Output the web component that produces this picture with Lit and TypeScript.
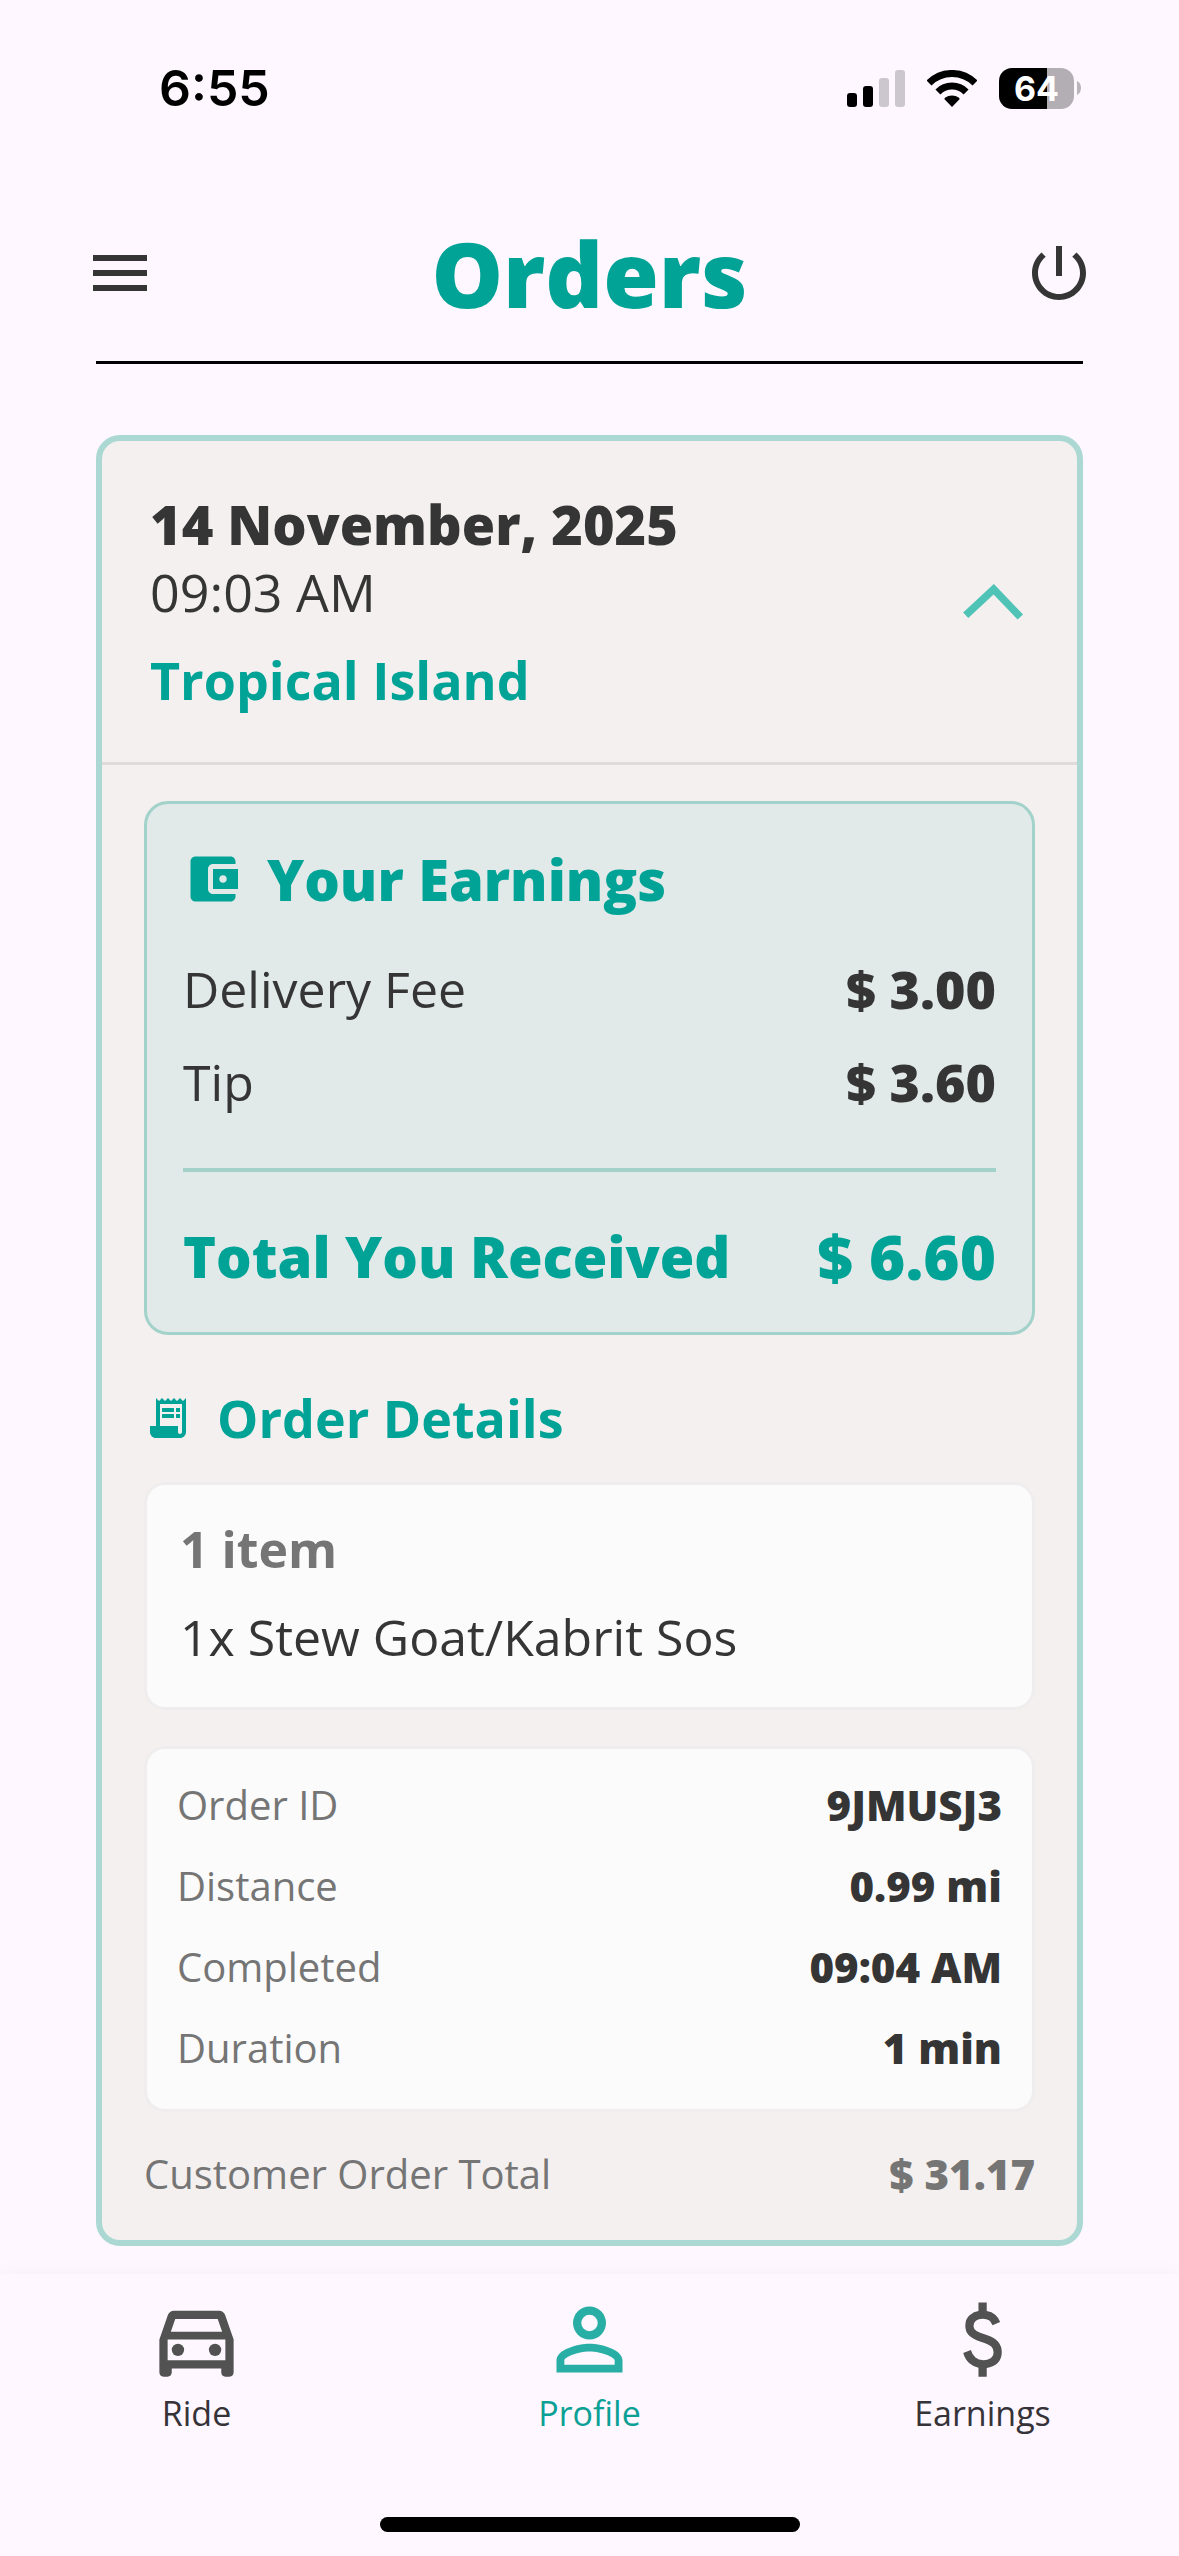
import { LitElement, html, css, svg } from "lit";
import { customElement, property, state } from "lit/decorators.js";
import { classMap } from "lit/directives/class-map.js";

interface Row {
  label: string;
  value: string;
}

interface Order {
  date: string;
  time: string;
  restaurant: string;
  earnings: Row[];
  received: Row;
  itemCount: string;
  items: string[];
  facts: Row[];
  customerTotal: Row;
}

const ORDER: Order = {
  date: "14 November, 2025",
  time: "09:03 AM",
  restaurant: "Tropical Island",
  earnings: [
    { label: "Delivery Fee", value: "$ 3.00" },
    { label: "Tip", value: "$ 3.60" },
  ],
  received: { label: "Total You Received", value: "$ 6.60" },
  itemCount: "1 item",
  items: ["1x Stew Goat/Kabrit Sos"],
  facts: [
    { label: "Order ID", value: "9JMUSJ3" },
    { label: "Distance", value: "0.99 mi" },
    { label: "Completed", value: "09:04 AM" },
    { label: "Duration", value: "1 min" },
  ],
  customerTotal: { label: "Customer Order Total", value: "$ 31.17" },
};

@customElement("status-bar")
export class StatusBar extends LitElement {
  static styles = css`
    :host {
      display: flex;
      align-items: center;
      justify-content: space-between;
      height: 176px;
      padding: 0 98px 0 159px;
      color: #000;
      font-family: Inter, "Liberation Sans", sans-serif;
    }
    .time {
      font-size: 50px;
      font-weight: 600;
      line-height: 60px;
    }
    .indicators {
      display: flex;
      align-items: center;
      gap: 22px;
    }
    .indicators svg {
      display: block;
    }
    .battery {
      display: flex;
      align-items: center;
      gap: 3px;
    }
    .level {
      width: 75px;
      border-radius: 13px;
      background: linear-gradient(90deg, #000 64%, #b3adb4 64%);
      color: #fff;
      font-size: 34px;
      font-weight: 700;
      line-height: 41px;
      text-align: center;
    }
  `;

  render() {
    return html`
      <span class="time">6:55</span>
      <div class="indicators">
        <svg width="58" height="37" viewBox="0 0 58 37" aria-hidden="true">
          <rect x="0" y="23" width="10" height="14" rx="3" />
          <rect x="16" y="16" width="10" height="21" rx="3" />
          <rect x="32" y="8" width="10" height="29" rx="3" fill="#ccc6ce" />
          <rect x="48" y="0" width="10" height="37" rx="3" fill="#ccc6ce" />
        </svg>
        <svg width="50" height="37" viewBox="0 0 50 37" aria-hidden="true">
          <g fill="none" stroke="#000" stroke-width="7">
            <path d="M2 13A32.5 32.5 0 0 1 48 13" />
            <path d="M10.9 21.9A20 20 0 0 1 39.1 21.9" />
          </g>
          <path d="M25 37 17.5 29.2Q17.2 28.4 18 27.8A11.6 11.6 0 0 1 32 27.8Q32.8 28.4 32.5 29.2Z" />
        </svg>
        <div class="battery">
          <span class="level">64</span>
          <svg width="4" height="14" viewBox="0 0 4 14" aria-hidden="true">
            <path d="M0 0Q4 2 4 7T0 14Z" fill="#b9b3ba" />
          </svg>
        </div>
      </div>
    `;
  }
}

@customElement("page-header")
export class PageHeader extends LitElement {
  static styles = css`
    :host {
      display: block;
      padding: 37px 84px 0;
    }
    .bar {
      display: flex;
      align-items: center;
      justify-content: space-between;
      padding-bottom: 28px;
    }
    .rule {
      height: 3px;
      margin: 0 12px;
      border: 0;
      background: #000;
    }
    .title {
      margin: 0;
      color: #00a396;
      font-size: 90px;
      font-weight: 800;
      line-height: 120px;
    }
    .action {
      display: block;
      padding: 0;
      border: 0;
      background: none;
      color: #353535;
    }
    .action svg {
      display: block;
      fill: currentColor;
    }
  `;

  render() {
    return html`
      <header>
        <div class="bar">
          <button class="action" aria-label="Menu">
            <svg width="72" height="72" viewBox="0 0 24 24">
              <path d="M3 18h18v-2H3v2zm0-5h18v-2H3v2zm0-7v2h18V6H3z" />
            </svg>
          </button>
          <h1 class="title">Orders</h1>
          <button class="action" aria-label="Go offline">
            <svg width="72" height="72" viewBox="0 0 24 24">
              <path
                d="M13 3h-2v10h2V3zm4.83 2.17-1.42 1.42C17.99 7.86 19 9.81 19 12c0 3.87-3.13 7-7 7s-7-3.13-7-7c0-2.19 1.01-4.14 2.58-5.42L6.17 5.17C4.23 6.82 3 9.26 3 12c0 4.97 4.03 9 9 9s9-4.03 9-9c0-2.74-1.23-5.18-3.17-6.83z"
              />
            </svg>
          </button>
        </div>
        <hr class="rule" />
      </header>
    `;
  }
}

@customElement("order-card")
export class OrderCard extends LitElement {
  @property({ attribute: false }) order: Order = ORDER;
  @state() private open = true;

  static styles = css`
    :host {
      display: block;
      border: 6px solid #abd8d2;
      border-radius: 24px;
      background: #f4f0ef;
      color: #353535;
    }
    h2,
    h3,
    p,
    ul,
    dl,
    dd {
      margin: 0;
      padding: 0;
    }
    ul {
      list-style: none;
    }
    svg {
      display: block;
    }
    .summary {
      display: flex;
      align-items: center;
      justify-content: space-between;
      padding: 50px 54px 49px 48px;
    }
    .summary.open {
      border-bottom: 3px solid #dfdbda;
    }
    .date {
      font-size: 54px;
      font-weight: 800;
      line-height: 66px;
    }
    .time {
      font-size: 52px;
      line-height: 70px;
    }
    .restaurant {
      margin-top: 20px;
      color: #00a396;
      font-size: 52px;
      font-weight: 700;
      line-height: 66px;
    }
    .toggle {
      padding: 0;
      border: 0;
      background: none;
    }
    .toggle.closed {
      transform: rotate(180deg);
    }
    .body {
      padding: 36px 42px 38px;
    }
    .heading {
      display: flex;
      align-items: center;
      color: #00a396;
      font-weight: 700;
    }
    .heading svg {
      fill: currentColor;
    }
    .row {
      display: flex;
      align-items: center;
      justify-content: space-between;
    }
    .row dd {
      font-weight: 800;
    }
    .earnings {
      padding: 45px 36px 37px;
      border: 3px solid #a3d2cb;
      border-radius: 24px;
      background: #e1eae9;
    }
    .earnings .heading {
      gap: 24px;
      font-size: 56px;
      font-weight: 800;
      line-height: 60px;
    }
    .fees {
      display: flex;
      flex-direction: column;
      gap: 25px;
      margin-top: 46px;
      padding-bottom: 52px;
      border-bottom: 4px solid #a3d2cb;
      font-size: 50px;
      line-height: 68px;
    }
    .fees dd {
      font-size: 52px;
    }
    .received {
      margin-top: 45px;
      color: #00a396;
      font-size: 56px;
      font-weight: 800;
      line-height: 78px;
    }
    .received dd {
      font-size: 62px;
    }
    .details {
      gap: 25px;
      margin: 49px 0 30px;
      font-size: 52px;
      line-height: 68px;
    }
    .panel {
      border: 3px solid #efedee;
      border-radius: 21px;
      background: #fbfbfb;
    }
    .items {
      padding: 30px 33px 36px;
      font-size: 50px;
      line-height: 68px;
    }
    .count {
      margin-bottom: 20px;
      color: #757575;
      font-weight: 700;
    }
    .facts {
      display: flex;
      flex-direction: column;
      gap: 24px;
      margin-top: 36px;
      padding: 27px 30px 33px;
      font-size: 40px;
      line-height: 57px;
    }
    .facts dt {
      color: #757575;
    }
    .customer {
      margin-top: 33px;
      color: #757575;
      font-size: 40px;
      line-height: 57px;
    }
    .facts dd,
    .customer dd {
      font-size: 42px;
    }
  `;

  private row(row: Row) {
    return html`<div class="row">
      <dt>${row.label}</dt>
      <dd>${row.value}</dd>
    </div>`;
  }

  private body() {
    const o = this.order;
    return html`
      <div class="body" id="order-body">
        <section class="earnings">
          <h3 class="heading">
            <svg width="60" height="60" viewBox="0 0 24 24" aria-hidden="true">
              <path
                d="M21 18v1c0 1.1-.9 2-2 2H5c-1.11 0-2-.9-2-2V5c0-1.1.89-2 2-2h14c1.1 0 2 .9 2 2v1h-9c-1.11 0-2 .9-2 2v8c0 1.1.89 2 2 2h9zm-9-2h10V8H12v8zm4-2.5c-.83 0-1.5-.67-1.5-1.5s.67-1.5 1.5-1.5 1.5.67 1.5 1.5-.67 1.5-1.5 1.5z"
              />
            </svg>
            Your Earnings
          </h3>
          <dl class="fees">${o.earnings.map((r) => this.row(r))}</dl>
          <dl class="received">${this.row(o.received)}</dl>
        </section>
        <section>
          <h3 class="heading details">
            <svg width="48" height="48" viewBox="0 0 24 24" aria-hidden="true">
              <path
                d="M19.5 3.5 18 2l-1.5 1.5L15 2l-1.5 1.5L12 2l-1.5 1.5L9 2 7.5 3.5 6 2v14H3v3c0 1.66 1.34 3 3 3h12c1.66 0 3-1.34 3-3V2l-1.5 1.5zM19 19c0 .55-.45 1-1 1s-1-.45-1-1v-3H8V5h11v14z"
              />
              <path d="M9 7h6v2H9zM16 7h2v2h-2zM9 10h6v2H9zM16 10h2v2h-2z" />
            </svg>
            Order Details
          </h3>
          <div class="panel items">
            <p class="count">${o.itemCount}</p>
            <ul>
              ${o.items.map((i) => html`<li>${i}</li>`)}
            </ul>
          </div>
          <dl class="panel facts">${o.facts.map((r) => this.row(r))}</dl>
          <dl class="customer">${this.row(o.customerTotal)}</dl>
        </section>
      </div>
    `;
  }

  render() {
    const o = this.order;
    return html`
      <div class=${classMap({ summary: true, open: this.open })}>
        <div>
          <h2 class="date">${o.date}</h2>
          <p class="time">${o.time}</p>
          <p class="restaurant">${o.restaurant}</p>
        </div>
        <button
          class=${classMap({ toggle: true, closed: !this.open })}
          aria-label="Order details"
          aria-expanded=${this.open ? "true" : "false"}
          aria-controls="order-body"
          @click=${() => (this.open = !this.open)}
        >
          <svg width="60" height="36" viewBox="0 0 60 36">
            <path
              d="M2.7 31.3 30.7 5.2 57.3 33"
              fill="none"
              stroke="#50c3b7"
              stroke-width="7.5"
            />
          </svg>
        </button>
      </div>
      ${this.open ? this.body() : null}
    `;
  }
}

const TABS = [
  {
    label: "Ride",
    href: "#ride",
    active: false,
    viewBox: "0 0 24 24",
    art: svg`<path d="M18.92 6.01C18.72 5.42 18.16 5 17.5 5h-11c-.66 0-1.21.42-1.42 1.01L3 12v8c0 .55.45 1 1 1h1c.55 0 1-.45 1-1v-1h12v1c0 .55.45 1 1 1h1c.55 0 1-.45 1-1v-8l-2.08-5.99zM6.85 7h10.29l1.08 3.11H5.77L6.85 7zM19 17H5v-5h14v5z"/><circle cx="7.5" cy="14.5" r="1.5"/><circle cx="16.5" cy="14.5" r="1.5"/>`,
  },
  {
    label: "Profile",
    href: "#profile",
    active: true,
    viewBox: "0 0 24 24",
    art: svg`<path fill-rule="evenodd" d="M12 4a4 4 0 1 0 0 8 4 4 0 0 0 0-8zm0 2a2 2 0 1 1 0 4 2 2 0 0 1 0-4zM12 13c-2.67 0-8 1.34-8 4v3h16v-3c0-2.66-5.33-4-8-4zm0 1.9c2.97 0 6.1 1.46 6.1 2.1v1.1H5.9V17c0-.64 3.13-2.1 6.1-2.1z"/>`,
  },
  {
    label: "Earnings",
    href: "#earnings",
    active: false,
    viewBox: "0 -960 960 960",
    art: svg`<path d="M441-120v-86q-53-12-91.5-46T293-348l74-30q15 48 44.5 73t77.5 25q41 0 69.5-18.5T587-356q0-35-22-55.5T463-458q-86-27-118-64.5T313-614q0-65 42-101t86-41v-84h80v84q50 8 82.5 36.5T651-650l-74 32q-12-32-34-48t-60-16q-44 0-67 19.5T393-614q0 33 30 52t104 40q69 20 104.5 63.5T667-358q0 71-42 108t-104 46v84h-80Z"/>`,
  },
];

@customElement("tab-bar")
export class TabBar extends LitElement {
  static styles = css`
    :host {
      display: block;
      background: #fef7ff;
      box-shadow: 0 0 18px rgba(0, 0, 0, 0.04);
    }
    .tabs {
      display: grid;
      grid-template-columns: repeat(3, 1fr);
      padding-top: 16px;
    }
    .tab {
      display: flex;
      flex-direction: column;
      align-items: center;
      color: #353338;
      font-size: 34px;
      line-height: 48px;
      text-decoration: none;
    }
    .tab svg {
      display: block;
      fill: #525252;
    }
    .tab.active {
      color: #0ba095;
    }
    .tab.active svg {
      fill: #28aea5;
    }
    .home {
      width: 420px;
      height: 15px;
      margin: 80px auto 24px;
      border-radius: 8px;
      background: #000;
    }
  `;

  render() {
    return html`
      <nav class="tabs">
        ${TABS.map(
          (t) => html`<a class=${classMap({ tab: true, active: t.active })} href=${t.href}>
            <svg width="99" height="99" viewBox=${t.viewBox} aria-hidden="true">${t.art}</svg>
            ${t.label}
          </a>`,
        )}
      </nav>
      <div class="home"></div>
    `;
  }
}

@customElement("app-root")
export class AppRoot extends LitElement {
  static styles = css`
    :host {
      display: flex;
      flex-direction: column;
      min-height: 100vh;
      background: #fef7ff;
      font-family: "Open Sans", "Noto Sans", sans-serif;
    }
    .content {
      flex: 1;
      padding: 71px 96px 28px;
    }
  `;

  render() {
    return html`
      <status-bar></status-bar>
      <page-header></page-header>
      <main class="content"><order-card .order=${ORDER}></order-card></main>
      <tab-bar></tab-bar>
    `;
  }
}
